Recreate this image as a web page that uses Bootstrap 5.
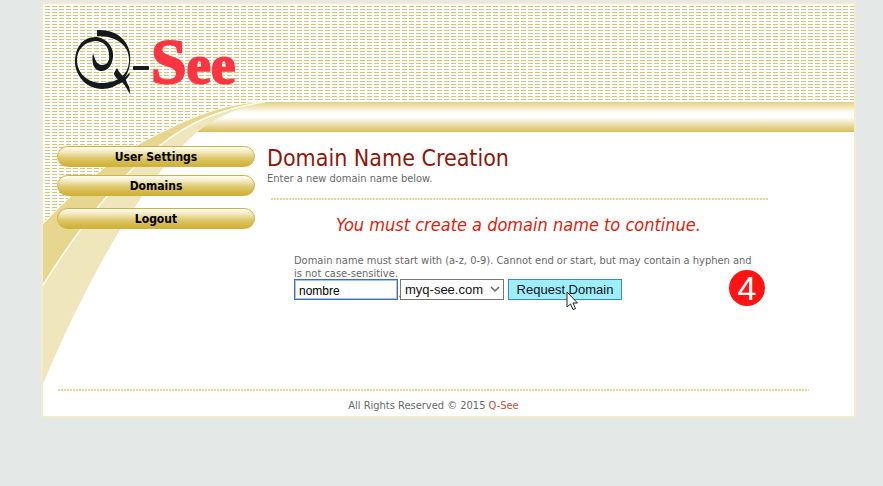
<!DOCTYPE html>
<html lang="en">
<head>
<meta charset="utf-8">
<meta name="viewport" content="width=device-width, initial-scale=1">
<title>Q-See - Domain Name Creation</title>
<link href="https://cdn.jsdelivr.net/npm/bootstrap@5.3.0/dist/css/bootstrap.min.css" rel="stylesheet">
<style>
body{background:#e4e9e8;color:#686868;font-family:"DejaVu Sans Condensed","DejaVu Sans",sans-serif;font-size:11px;line-height:13px}
.page-wrap{padding:2px 27px 40px 41px}
.sheet{border:2px solid #f2ebd0;background:#fff}
.backdrop{inset:0;z-index:0}
.masthead{padding:22px 28px 48px}
.masthead a{width:180px}
.brand-word{font-family:"Liberation Serif",serif;font-weight:700;font-size:55px}
.brand-word .cap{font-size:64px}
.side{flex:0 0 212px;padding:1px 0 0 14px}
.pill{width:198px;height:21px;margin-bottom:8px;border:1px solid #cfb243;border-radius:11px;background:linear-gradient(#fffef6,#f5edca 22%,#dcc668 60%,#cfb133);color:#000;font-size:12px;font-weight:700;line-height:20px}
.pill.apart{margin-top:12px}
.main-area{padding:0 84px 0 12px;min-height:244px}
h1{font-size:23px;line-height:26px;color:#8e170c;margin-bottom:1px}
.dots{height:2px;background:repeating-linear-gradient(90deg,#e5d795 0 2px,transparent 2px 3px)}
.main-dots{margin:13px 1px 13px 4px}
.notice{font-size:18px;line-height:24px;color:#e0200c;margin-bottom:17px}
.entry{padding-left:27px}
.hint{max-width:463px;margin-bottom:-1px}
.ctl{height:21px;font:13px/19px "Liberation Sans",sans-serif;color:#111}
.host{width:104px;border:1px solid #3f6fb5;outline:1px solid #a5c3ee;outline-offset:-2px;padding:2px 4px 0;font-size:12px;color:#000}
.dot-sep{width:2px}
.zone{width:104px;border:1px solid #777;padding:0 4px;appearance:none;background:#fff}
.chevron{right:3px;top:6px}
.go{width:114px;border:1px solid #3d8fae;background:#9eeeff;padding:0}
.pointer{left:58px;top:12px}
.step{width:36px;height:36px;right:5px;top:16px;background:#ff1414;font:34px/36px "Liberation Sans",sans-serif}
.foot{padding:0 45px 4px 15px}
.foot p{padding-top:8px}
.foot a{color:#b8553a}
</style>
</head>
<body>
<div class="page-wrap">
<div class="sheet position-relative">
  <svg class="backdrop position-absolute" width="100%" height="382" aria-hidden="true">
    <defs>
      <pattern id="dashes" x="2" y="2" width="7" height="6" patternUnits="userSpaceOnUse">
        <rect width="7" height="6" fill="#fffffa"/>
        <rect width="5" height="1" fill="#e0c45c"/>
        <rect y="3" width="5" height="1" fill="#bfc2bd"/>
      </pattern>
      <linearGradient id="band" gradientUnits="userSpaceOnUse" x1="0" y1="98" x2="0" y2="128">
        <stop offset="0" stop-color="#e3d17f"/><stop offset=".15" stop-color="#efe5b5"/>
        <stop offset=".36" stop-color="#fff"/><stop offset=".52" stop-color="#fffefa"/>
        <stop offset=".75" stop-color="#ebdfae"/><stop offset="1" stop-color="#d7bd57"/>
      </linearGradient>
    </defs>
    <rect width="100%" height="98" fill="url(#dashes)"/>
    <path d="M0 97H215C175 103 141 116 94 141C64 159 31 187 0 220Z" fill="url(#dashes)"/>
    <rect x="205" y="98" width="100%" height="30" fill="url(#band)"/>
    <path d="M154 128C172 113 190 103 208 98V128Z" fill="url(#band)"/>
    <path d="M0 220C31 187 64 159 94 141C141 116 175 100 220 98C180 104 147 117 115 143C75 173 35 225 0 281Z" fill="#e6d68f"/>
    <path d="M0 282C35 226 75 174 115 144C147 118 180 105 222 98C194 104 174 113 154 128C101 175 45 272 0 380Z" fill="#efe6bc"/>
    <path d="M0 281C35 225 75 173 115 143C147 117 180 104 222 98" fill="none" stroke="#fffdf0" stroke-width="1.5"/>
    <path d="M0 220C31 187 64 159 94 141C141 116 175 100 218 98" fill="none" stroke="#fffdf0"/>
  </svg>

  <header class="masthead position-relative">
    <a href="#" class="d-block" aria-label="Q-See">
      <svg class="d-block" width="180" height="71" viewBox="0 0 180 71">
        <g fill="#141a19">
          <path d="M26 4C46 3 62 16 59 37C58 51 47 63 31 63C15 63 3 49 4 33C5 19 14 10 26 11C37 13 43 22 42 31C41 40 36 46 29 45C23 44 20 37 22 27C24 34 26 39 31 39C36 39 39 35 38 29C38 20 32 15 24 15C13 16 6 24 6 34C6 48 18 58 33 57C47 56 57 49 58 36C59 21 48 10 26 10Z"/>
          <path d="M46 42C49 49 55 51 56 57C58 60 59 62 59 68C56 64 55 60 51 56C47 53 43 51 43 47Z"/>
          <path d="M46 56C51 54 55 51 58 47L59 48C56 53 53 56 48 58Z"/>
          <rect x="62" y="40" width="16" height="4" rx="1"/>
        </g>
        <text class="brand-word" x="80" y="57" fill="#fb3642" stroke="#fb3642" stroke-width="2"><tspan class="cap">S</tspan>ee</text>
      </svg>
    </a>
  </header>

  <div class="d-flex position-relative">
    <nav class="side" aria-label="Account">
      <a class="pill d-block text-center text-decoration-none" href="#">User Settings</a>
      <a class="pill d-block text-center text-decoration-none" href="#">Domains</a>
      <a class="pill apart d-block text-center text-decoration-none" href="#">Logout</a>
    </nav>
    <main class="main-area flex-grow-1">
      <h1 class="fw-normal">Domain Name Creation</h1>
      <p class="mb-0">Enter a new domain name below.</p>
      <div class="dots main-dots"></div>
      <p class="notice fst-italic text-center">You must create a domain name to continue.</p>
      <form class="entry position-relative" onsubmit="return false">
        <p class="hint"><label for="host">Domain name must start with (a-z, 0-9). Cannot end or start, but may contain a hyphen and is not case-sensitive.</label></p>
        <div class="d-flex align-items-end">
          <input class="ctl host" id="host" type="text" value="nombre"><span class="dot-sep">.</span>
          <div class="position-relative me-1">
            <select class="ctl zone d-block rounded-0" aria-label="Domain"><option>myq-see.com</option></select>
            <svg class="chevron position-absolute pe-none" width="12" height="9" viewBox="0 0 12 9"><path d="M2 2L6 6L10 2" fill="none" stroke="#666" stroke-width="1.5"/></svg>
          </div>
          <div class="position-relative">
            <button class="ctl go d-block" type="submit">Request Domain</button>
            <svg class="pointer position-absolute pe-none" width="13" height="20" viewBox="0 0 13 20"><path d="M1 1V16L4.500 13L7 18.500L9.500 17.500L7 12H11.500Z" fill="#fff" stroke="#1b2230"/></svg>
          </div>
        </div>
        <span class="step position-absolute rounded-circle text-white text-center">4</span>
      </form>
    </main>
  </div>

  <footer class="foot position-relative">
    <div class="dots"></div>
    <p class="mb-0 text-center">All Rights Reserved © 2015 <a class="text-decoration-none" href="#">Q-See</a></p>
  </footer>
</div>
</div>
</body>
</html>
